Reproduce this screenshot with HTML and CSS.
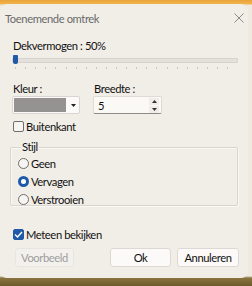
FILE: index.html
```html
<!DOCTYPE html>
<html>
<head>
<meta charset="utf-8">
<link rel="stylesheet" href="styles.css">
</head>
<body>
<div class="dialog">
  <div class="titlebar">
    <span class="title">Toenemende omtrek</span>
    <svg class="close" width="10" height="10" viewBox="0 0 10 10"><path d="M0.5 0.5L9.5 9.5M9.5 0.5L0.5 9.5" stroke="#8a8a8a" stroke-width="1"/></svg>
  </div>
  <div class="content">
    <div class="lbl opacity">Dekvermogen : 50%</div>
    <div class="slider">
      <div class="track"></div>
      <div class="thumb"></div>
      <div class="ticks"></div>
    </div>
    <div class="row2">
      <div class="col">
        <div class="lbl">Kleur :</div>
        <div class="colorbox"><div class="swatch"></div><div class="dd"><svg width="5" height="3" viewBox="0 0 5 3"><path d="M0 0H5L2.5 3Z" fill="#222"/></svg></div></div>
      </div>
      <div class="col">
        <div class="lbl">Breedte :</div>
        <div class="numbox"><span class="num">5</span>
          <div class="spin">
            <div class="sb"><svg width="5" height="3" viewBox="0 0 5 3"><path d="M0 3H5L2.5 0Z" fill="#333"/></svg></div>
            <div class="sb"><svg width="5" height="3" viewBox="0 0 5 3"><path d="M0 0H5L2.5 3Z" fill="#333"/></svg></div>
          </div>
        </div>
      </div>
    </div>
    <div class="check outer"><span class="box"></span>Buitenkant</div>
    <fieldset class="group">
      <legend>Stijl</legend>
      <div class="radio"><span class="rb"></span>Geen</div>
      <div class="radio"><span class="rb on"></span>Vervagen</div>
      <div class="radio"><span class="rb"></span>Verstrooien</div>
    </fieldset>
    <div class="check live"><span class="box on"><svg width="9" height="7" viewBox="0 0 9 7"><path d="M1 3.5L3.5 6L8 1" stroke="#fff" stroke-width="1.4" fill="none"/></svg></span>Meteen bekijken</div>
    <div class="buttons">
      <div class="btn disabled">Voorbeeld</div>
      <div class="spacer"></div>
      <div class="btn ok">Ok</div>
      <div class="btn cancel">Annuleren</div>
    </div>
  </div>
</div>
</body>
</html>
```
FILE: styles.css
```css
html, body { margin: 0; padding: 0; }
body {
  width: 252px; height: 286px; overflow: hidden;
  background: linear-gradient(180deg, #e9a23a 0px, #f0b54a 4px, #efe9df 5px, #efe9df 276px, #8a7440 278px, #6d5a2c 286px);
  font-family: "Lato", "Noto Sans", sans-serif;
  font-size: 11.2px; letter-spacing: -0.4px; color: #111;
}
.dialog {
  margin-top: 4px; width: 248px; height: 274px;
  background: #f1eee8;
  border-radius: 7px;
  box-sizing: border-box;
}
.titlebar {
  height: 28px; display: flex; align-items: center; justify-content: space-between;
  padding: 0 4px 0 5px;
}
.title { color: #6a6a6a; }
.content { padding: 0 10px 0 12px; }
.lbl { line-height: 15px; }
.opacity { margin-top: 6px; margin-left: 1px; }
.slider { position: relative; height: 16px; margin-top: 2px; }
.track {
  position: absolute; left: 0; right: 0; top: 3px; height: 3px;
  background: #e4e1dc; border: 1px solid #d6d3ce; border-radius: 1px;
}
.thumb {
  position: absolute; left: 1px; top: 0; width: 5px; height: 9px;
  background: #1e5aa8; border-radius: 1px 1px 2px 2px;
}
.ticks {
  position: absolute; left: 3px; right: 2px; top: 12px; height: 2px;
  background: repeating-linear-gradient(90deg, #c9c6c1 0 1px, transparent 1px 10.1px);
}
.row2 { display: flex; gap: 13px; margin-top: 10px; }
.col .lbl { margin-left: 1px; }
.colorbox {
  width: 68px; height: 18px; box-sizing: border-box;
  display: flex; background: #fbfaf8; border: 1px solid #d9d6d1; border-radius: 2px;
}
.swatch { width: 52px; margin: 1px; background: #959392; }
.dd { flex: 1; display: flex; align-items: center; justify-content: center; }
.numbox {
  width: 69px; height: 18px; box-sizing: border-box;
  display: flex; align-items: center; background: #fbf9f5;
  border: 1px solid #dedad4; border-bottom: 1px solid #8d8b88; border-radius: 2px;
}
.num { flex: 1; padding-left: 4px; line-height: 15px; }
.spin { display: flex; flex-direction: column; width: 10px; margin-right: 2px; gap: 1px; }
.sb { height: 7px; display: flex; align-items: center; justify-content: center; background: #f0ede8; }
.check { display: flex; align-items: center; line-height: 15px; }
.box {
  width: 11px; height: 11px; box-sizing: border-box; margin-right: 2px;
  border: 1px solid #6e6e6e; border-radius: 2px; background: #f7f5f1;
  display: flex; align-items: center; justify-content: center;
}
.box.on { background: #1e5aa8; border-color: #1e5aa8; }
.outer { margin-top: 5px; margin-left: 1px; }
.group {
  margin: 6px 0 0 -2px; padding: 0 0 3px 7px; width: 228px; box-sizing: border-box;
  border: 1px solid #d9d5cf; border-radius: 2px; height: 66px;
  box-shadow: inset 1px 1px 0 #faf8f4, 1px 1px 0 #faf8f4;
}
.group legend { padding: 0 1px; margin-left: 3px; line-height: 14px; }
.radio { display: flex; align-items: center; height: 18px; line-height: 15px; }
.rb {
  width: 11px; height: 11px; box-sizing: border-box; border-radius: 50%;
  border: 1px solid #6e6e6e; margin-right: 2px; background: #f7f5f1;
}
.rb.on { border: 3px solid #1e5aa8; background: #fff; }
.live { margin-top: 21px; margin-left: 1px; }
.buttons { display: flex; margin-top: 6px; gap: 6px; padding-left: 3px; margin-right: -1px; }
.spacer { flex: 1; }
.btn {
  height: 19px; box-sizing: border-box; display: flex; align-items: center; justify-content: center;
  background: #fbfaf8; border: 1px solid #dcd9d4; border-radius: 3px;
}
.disabled { width: 59px; color: #9d9d9d; background: #f3f1ed; border-color: #e9e6e1; }
.ok { width: 61px; }
.cancel { width: 62px; }
```
